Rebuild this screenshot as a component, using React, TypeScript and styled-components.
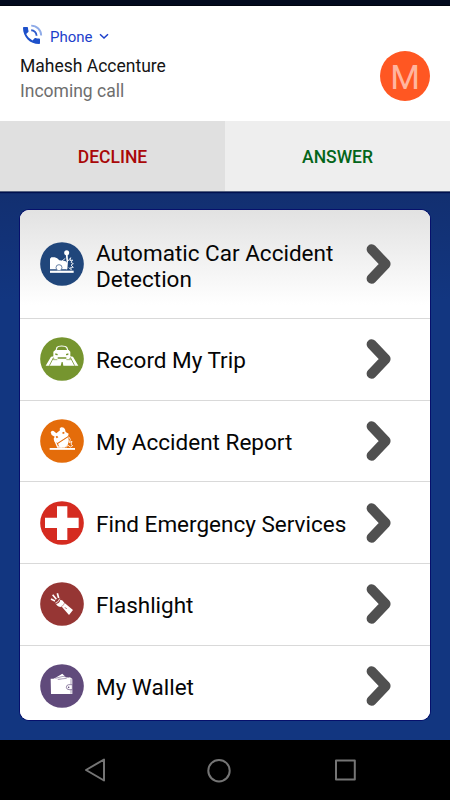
import React from 'react';
import styled, { createGlobalStyle } from 'styled-components';

const GlobalStyle = createGlobalStyle`
  * { box-sizing: border-box; }
  body { margin: 0; background: #123680; font-family: Roboto, sans-serif; }
`;

const Screen = styled.div`
  width: 450px;
  height: 800px;
  overflow: hidden;
  display: flex;
  flex-direction: column;
  background: linear-gradient(#122f70 190px, #123680 300px);
`;
const StatusBar = styled.div`
  flex: 0 0 6px;
  background: #020a1e;
  border-bottom: 1px solid #00040f;
`;
const Notification = styled.section`
  flex: 0 0 115px;
  display: flex;
  justify-content: space-between;
  padding: 17px 20px 0;
  background: #fff;
`;
const AppLine = styled.div`
  display: flex;
  align-items: center;
  height: 25px;
  color: #1d3fcb;
  font-size: 15px;
`;
const AppName = styled.span`
  margin: 2px 6px 0 6px;
`;
const Caller = styled.div`
  margin-top: 6px;
  font-size: 17.5px;
  line-height: 25px;
  color: #151515;
`;
const CallState = styled.div`
  font-size: 17.5px;
  line-height: 25px;
  color: #6e6e6e;
`;
const Avatar = styled.div`
  width: 50px;
  height: 50px;
  margin-top: 28px;
  border-radius: 50%;
  background: #ff5722;
  color: #ffb59f;
  font-size: 34px;
  line-height: 52px;
  text-align: center;
`;
const Actions = styled.div`
  flex: 0 0 71px;
  display: grid;
  grid-template-columns: 1fr 1fr;
  border-bottom: 1px solid #54617f;
  box-shadow: 0 1px 1px #00104e;
`;
const Action = styled.button<{ $ink: string; $fill: string }>`
  border: 0;
  padding: 1px 0 0;
  background: ${p => p.$fill};
  color: ${p => p.$ink};
  font: 500 17.5px Roboto, sans-serif;
`;
const Menu = styled.main`
  flex: 0 0 510px;
  margin: 18px 20px 20px;
  overflow: hidden;
  border-radius: 9px;
  background: #fff;
  box-shadow: 0 0 0 1px #06106c;
`;
const Label = styled.div`
  flex: 1;
  padding: 2px 0 0 12px;
  font-size: 22.5px;
  line-height: 26px;
  color: #050505;
`;
const Row = styled.div<{ $tall?: boolean }>`
  display: flex;
  align-items: center;
  height: ${p => (p.$tall ? 109 : 81.7)}px;
  padding: 0 38px 0 20px;
  border-bottom: 1px solid #d9d9d9;
  background: ${p => (p.$tall ? 'linear-gradient(#e2e2e2, #fff 88%)' : '#fff')};
  ${Label} { padding-top: ${p => (p.$tall ? 4 : 2)}px; }
`;
const Badge = styled.svg`
  width: 44px;
  height: 44px;
  flex: none;
  display: block;
`;
const Chevron = styled.svg`
  width: 26px;
  height: 42px;
  flex: none;
`;
const NavBar = styled.nav`
  flex: 0 0 60px;
  display: grid;
  grid-template-columns: 26px 26px 26px;
  column-gap: 98px;
  justify-content: start;
  align-items: center;
  padding: 0 0 0 83px;
  background: #000;
`;
const NavIcon = styled.svg`
  width: 26px;
  height: 26px;
  fill: none;
  stroke: #757575;
  stroke-width: 2;
  stroke-linejoin: round;
  overflow: visible;
`;

const crash = (
  <g fill="#fff">
    <path d="M30 50 L34 46 H44 Q52 48 58 55 L76 57 L82 63 V82 H30z" />
    <circle cx="57" cy="77" r="9" stroke="#20467b" strokeWidth="2" />
    <circle cx="80" cy="32" r="7.5" />
    <path d="M77 36 H83 L84 57 L81 82 H78 L80 60z" />
    <path d="M66 57 L76 49 M84 57 L92 47 L90 56 L98 54 L93 61 L100 65 L93 69 L100 76 L92 76 L94 83 L86 77" fill="none" stroke="#fff" strokeWidth="2.6" />
    <rect x="30" y="86" width="71" height="6.5" />
  </g>
);
const trip = (
  <g fill="#fff">
    <path d="M42 58 L33 59 L17 86 H62 L65 75 H68 L70 86 H115 L99 59 L90 58 V65 H42z" />
    <path d="M28 86 L41 61 M104 86 L91 61" stroke="#76952f" strokeWidth="2.5" />
    <path d="M47 44 L51 31 Q54 27 65 27 Q77 27 80 31 L85 44" fill="none" stroke="#fff" strokeWidth="3.5" />
    <path d="M40 44 L46 39 H86 L91 44 V60 L87 67 H79 V61 H53 V67 H44 L40 60z" />
    <path d="M46 49 L53 51 V55 L46 54z M85 49 L78 51 V55 L85 54z" fill="#76952f" />
    <path d="M40 64 V68 H52 M79 68 H91 V64" fill="none" stroke="#76952f" strokeWidth="2" />
  </g>
);
const report = (
  <g fill="#fff">
    <path d="M32 40 Q34 34 41 36 L49 43 L60 34 Q57 27 64 25 Q72 24 75 31 L77 39 L86 44 L84 52 L53 72 L43 68 L41 59 L44 53 L35 48z" />
    <path d="M47 53 L51 50 L55 55 L50 58z M66 41 L72 38 L74 43 L69 45z" fill="#e46c0a" />
    <path d="M54 74 L85 54 Q89 67 83 78 L74 86 H63 Q55 82 54 74z" />
    <path d="M52 73 L85 52" stroke="#e46c0a" strokeWidth="1.6" />
    <path d="M46 68 L53 84 H65" fill="none" stroke="#fff" strokeWidth="4" />
    <path d="M86 53 L91 61 L88 71 L96 67 L93 76 L98 80 L91 84 L84 79 L77 86" fill="none" stroke="#fff" strokeWidth="2.6" />
    <rect x="29" y="87" width="76" height="5.5" />
  </g>
);
const cross = <path d="M51 16 H82 V50 H116 V81 H82 V117 H51 V81 H15 V50 H51z" fill="#fff" />;
const torch = (
  <g fill="#fff">
    <path d="M48 66 Q59 64 61 53 Q68 53 73 62 L99 84 L87 99 L66 75 Q53 76 48 66z" />
    <path d="M46 63 Q57 60 59 50" fill="none" stroke="#fff" strokeWidth="2.5" />
    <path d="M45 57 L33 51 M49 52 L38 38 M56 48 L52 34" stroke="#fff" strokeWidth="5" />
    <path d="M63 74 Q71 72 74 62" fill="none" stroke="#963634" strokeWidth="1.5" />
    <path d="M75 76 L80 81" stroke="#963634" strokeWidth="2.5" />
  </g>
);
const wallet = (
  <g fill="#fff">
    <path d="M44 43 L67 29 L78 40 L91 40 L93 45 H40z" />
    <path d="M32 44 H47 L57 46 L94 43 Q97 43 97 47 V90 H33z" />
    <path d="M46 43 L69 37 L88 40 M53 46 L80 43 M93 45 V60 M93 75 V89" fill="none" stroke="#604a7b" strokeWidth="1.6" />
    <path d="M97 62 H86 Q79 63 79 70 Q80 77 87 77 H97z" stroke="#604a7b" strokeWidth="2" />
    <circle cx="86" cy="70" r="2.4" fill="#604a7b" />
  </g>
);

const items = [
  { label: 'Automatic Car Accident Detection', color: '#20467b', art: crash },
  { label: 'Record My Trip', color: '#76952f', art: trip },
  { label: 'My Accident Report', color: '#e46c0a', art: report },
  { label: 'Find Emergency Services', color: '#d52b20', art: cross },
  { label: 'Flashlight', color: '#963634', art: torch },
  { label: 'My Wallet', color: '#604a7b', art: wallet },
];

export default function App() {
  return (
    <>
      <GlobalStyle />
      <Screen>
        <StatusBar />
        <Notification>
          <div>
            <AppLine>
              <svg width="24" height="24" viewBox="0 0 24 24">
                <path fill="#1d50ca" d="M19 14.6c-1.2 0-2.3-.2-3.4-.55-.35-.1-.73-.03-1 .24l-2.1 2.1c-2.7-1.4-4.9-3.6-6.3-6.3l2.1-2.1c.27-.26.35-.63.24-1C8.2 5.9 8 4.9 8 3.9c0-.55-.43-1-1-1H4c-.55 0-1 .45-1 1C3 12.9 10.1 20 19 20c.55 0 1-.45 1-1v-3.4c0-.55-.45-1-1-1z" />
                <path fill="none" stroke="#8fabe8" strokeWidth="1.9" d="M11.2 1.6a10 10 0 0 1 10 10" />
                <path fill="none" stroke="#2d5bcd" strokeWidth="1.9" d="M11.2 6.3a5.4 5.4 0 0 1 5.4 5.4" />
              </svg>
              <AppName>Phone</AppName>
              <svg width="10" height="8" viewBox="0 0 10 8"><path d="M1 2.2 L5 6 L9 2.2" fill="none" stroke="#1d3fcb" strokeWidth="1.5" /></svg>
            </AppLine>
            <Caller>Mahesh Accenture</Caller>
            <CallState>Incoming call</CallState>
          </div>
          <Avatar>M</Avatar>
        </Notification>
        <Actions>
          <Action $ink="#a90808" $fill="#e0e0e0">DECLINE</Action>
          <Action $ink="#04651a" $fill="#eeeeee">ANSWER</Action>
        </Actions>
        <Menu>
          {items.map((item, i) => (
            <Row key={item.label} $tall={i === 0}>
              <Badge viewBox="0 0 132 132">
                <circle cx="66" cy="66" r="65.5" fill={item.color} />
                {item.art}
              </Badge>
              <Label>{item.label}</Label>
              <Chevron viewBox="0 0 26 42">
                <path d="M5.6 6.3 L19.6 21 L5.6 35.7" fill="none" stroke="#505050" strokeWidth="10" strokeLinecap="round" strokeLinejoin="round" />
              </Chevron>
            </Row>
          ))}
        </Menu>
        <NavBar>
          <NavIcon viewBox="0 0 26 26"><path d="M3 13 L21 2.5 V23.5z" /></NavIcon>
          <NavIcon viewBox="0 0 26 26"><circle cx="12" cy="13.7" r="10.7" /></NavIcon>
          <NavIcon viewBox="0 0 26 26"><rect x="5" y="3.5" width="18.8" height="19" /></NavIcon>
        </NavBar>
      </Screen>
    </>
  );
}
